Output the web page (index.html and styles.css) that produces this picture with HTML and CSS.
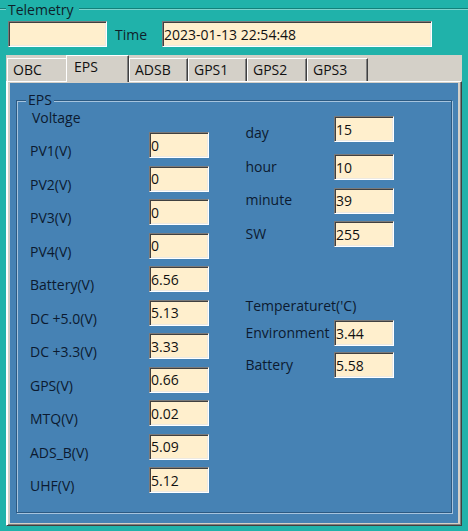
FILE: index.html
```html
<!DOCTYPE html>
<html lang="en">
<head>
    <meta charset="UTF-8">
    <meta name="viewport" content="width=device-width, initial-scale=1.0">
    <title>Telemetry</title>
    <link rel="stylesheet" href="styles.css">
</head>
<body>
    <div class="telemetry">
        <div class="gb-head">
            <span class="gb-line short"></span>
            <span class="gb-title">Telemetry</span>
            <span class="gb-line"></span>
        </div>
        <div class="top-row">
            <input class="field blank" type="text" value="" readonly>
            <span class="time-label">Time</span>
            <input class="field time" type="text" value="2023-01-13 22:54:48" readonly>
        </div>

        <div class="tabs">
            <div class="tab-strip">
                <div class="tab t-obc">OBC</div>
                <div class="tab t-eps active">EPS</div>
                <div class="tab t-adsb">ADSB</div>
                <div class="tab t-gps1">GPS1</div>
                <div class="tab t-gps2">GPS2</div>
                <div class="tab t-gps3">GPS3</div>
            </div>
            <div class="tab-body">
                <div class="page">
                    <div class="groupbox">
                        <span class="legend">EPS</span>
                        <div class="cols">
                            <div class="col left">
                                <div class="caption">Voltage</div>
                                <div class="row"><span class="lbl">PV1(V)</span><input class="field small" type="text" value="0" readonly></div>
                                <div class="row"><span class="lbl">PV2(V)</span><input class="field small" type="text" value="0" readonly></div>
                                <div class="row"><span class="lbl">PV3(V)</span><input class="field small" type="text" value="0" readonly></div>
                                <div class="row"><span class="lbl">PV4(V)</span><input class="field small" type="text" value="0" readonly></div>
                                <div class="row"><span class="lbl">Battery(V)</span><input class="field small" type="text" value="6.56" readonly></div>
                                <div class="row"><span class="lbl">DC +5.0(V)</span><input class="field small" type="text" value="5.13" readonly></div>
                                <div class="row"><span class="lbl">DC +3.3(V)</span><input class="field small" type="text" value="3.33" readonly></div>
                                <div class="row"><span class="lbl">GPS(V)</span><input class="field small" type="text" value="0.66" readonly></div>
                                <div class="row"><span class="lbl">MTQ(V)</span><input class="field small" type="text" value="0.02" readonly></div>
                                <div class="row"><span class="lbl">ADS_B(V)</span><input class="field small" type="text" value="5.09" readonly></div>
                                <div class="row"><span class="lbl">UHF(V)</span><input class="field small" type="text" value="5.12" readonly></div>
                            </div>
                            <div class="col right">
                                <div class="row day"><span class="lbl">day</span><input class="field small" type="text" value="15" readonly></div>
                                <div class="row"><span class="lbl">hour</span><input class="field small" type="text" value="10" readonly></div>
                                <div class="row"><span class="lbl">minute</span><input class="field small" type="text" value="39" readonly></div>
                                <div class="row"><span class="lbl">SW</span><input class="field small" type="text" value="255" readonly></div>
                                <div class="caption temp">Temperaturet('C)</div>
                                <div class="row tight"><span class="lbl">Environment</span><input class="field small" type="text" value="3.44" readonly></div>
                                <div class="row tight"><span class="lbl">Battery</span><input class="field small" type="text" value="5.58" readonly></div>
                            </div>
                        </div>
                    </div>
                </div>
            </div>
        </div>
    </div>
</body>
</html>
```

FILE: styles.css
```css
body {
    margin: 0;
    padding: 0;
    background-color: #20b2aa;
    font-family: "Open Sans", "Noto Sans", sans-serif;
    font-size: 14px;
    line-height: 19px;
    color: #0f1f2a;
    overflow: hidden;
}

/* Telemetry group header */
.gb-head {
    display: flex;
    align-items: flex-start;
    height: 19px;
}
.gb-line {
    flex: 1;
    height: 0;
    margin-top: 8px;
    border-top: 1px solid #14807a;
    border-bottom: 1px solid #7cd4ce;
}
.gb-line.short {
    flex: none;
    width: 6px;
}
.gb-title {
    padding: 0 5px 0 2px;
}

.top-row {
    display: flex;
    align-items: center;
    margin: 2px 0 0 8px;
    height: 26px;
}
.time-label {
    width: 47px;
    margin-left: 8px;
}

/* text boxes */
.field {
    box-sizing: border-box;
    height: 26px;
    margin: 0;
    padding: 0 0 0 1px;
    font-family: "Open Sans", "Noto Sans", sans-serif;
    font-size: 14px;
    color: #111;
    background-color: #ffefcd;
    border: 1px solid;
    border-color: #7a7a7a #ffffff #ffffff #7a7a7a;
    box-shadow: inset 1px 1px #404040, inset -1px -1px #ece9e2;
    outline: none;
}
.field.blank {
    width: 99px;
}
.field.time {
    width: 270px;
}
.field.small {
    width: 60px;
    flex: none;
}

/* tab control */
.tabs {
    margin: 8px 0 0 6px;
    width: 456px;
}
.tab-strip {
    display: flex;
    align-items: flex-end;
    height: 26px;
    padding-left: 1px;
    background-color: #d4d0c8;
}
.tab {
    box-sizing: border-box;
    height: 23px;
    padding: 1px 0 0 5px;
    color: #111;
    background-color: #d4d0c8;
    border-top: 1px solid #fff;
    border-left: 1px solid #fff;
    border-right: 1px solid #404040;
    box-shadow: inset -1px 0 #808080;
}
.tab.active {
    position: relative;
    z-index: 1;
    height: 27px;
    margin-bottom: -1px;
    padding-left: 7px;
}
.t-obc { width: 59px; border-right: none; box-shadow: none; }
.t-eps { width: 63px; }
.t-adsb { width: 59px; }
.t-gps1 { width: 59px; }
.t-gps2 { width: 60px; }
.t-gps3 { width: 61px; }

.tab-body {
    box-sizing: border-box;
    height: 445px;
    padding: 1px 3px 2px 3px;
    background-color: #d4d0c8;
    border-top: 1px solid #fff;
    border-left: 1px solid #fff;
    border-right: 1px solid #404040;
    border-bottom: 1px solid #404040;
    box-shadow: inset 1px 0 #fff, inset -1px -1px #808080;
}
.page {
    box-sizing: border-box;
    height: 100%;
    display: flex;
    flex-direction: column;
    padding: 17px 6px 10px 6px;
    background-color: #4682b4;
}

/* inner group box */
.groupbox {
    position: relative;
    flex: 1;
    border: 1px solid #2c5a82;
    box-shadow: inset 1px 1px #a6c4de, 1px 1px #a6c4de;
    padding: 7px 0 0 13px;
    color: #0c1a30;
}
.legend {
    position: absolute;
    left: 9px;
    top: -11px;
    padding: 0 2px;
    background-color: #4682b4;
}

.cols {
    display: flex;
}
.col.left {
    width: 215.5px;
}
.caption {
    padding-left: 2px;
    margin-bottom: 5px;
}
.row {
    display: flex;
    align-items: flex-start;
    height: 33.5px;
}
.left .lbl {
    width: 119px;
    padding-top: 9.3px;
}
.right .lbl {
    width: 88.5px;
    padding-top: 2.5px;
}
.right .row.day {
    margin-top: 8px;
    height: 38px;
}
.right .row.day .lbl {
    padding-top: 7px;
}
.caption.temp {
    padding-left: 0;
    margin-top: 41.5px;
}
.row.tight {
    height: 32.3px;
}
```
